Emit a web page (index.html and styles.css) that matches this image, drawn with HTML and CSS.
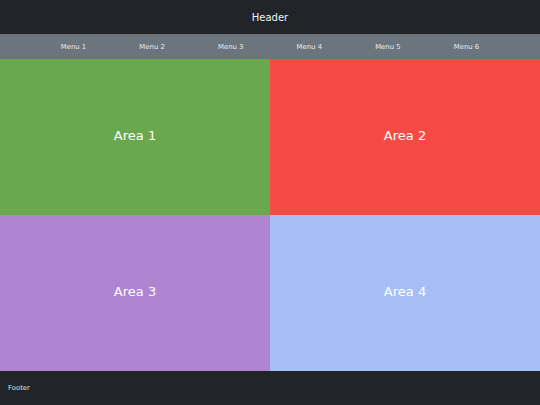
FILE: index.html
```html
<!DOCTYPE html>
<html>
<head>
<meta charset="utf-8">
<link rel="stylesheet" href="styles.css">
</head>
<body>
<div class="page">
  <header class="header">Header</header>
  <nav class="nav">
    <span class="nav-item">Menu 1</span>
    <span class="nav-item">Menu 2</span>
    <span class="nav-item">Menu 3</span>
    <span class="nav-item">Menu 4</span>
    <span class="nav-item">Menu 5</span>
    <span class="nav-item">Menu 6</span>
  </nav>
  <main class="grid">
    <div class="area area-1">Area 1</div>
    <div class="area area-2">Area 2</div>
    <div class="area area-3">Area 3</div>
    <div class="area area-4">Area 4</div>
  </main>
  <footer class="footer">Footer</footer>
</div>
</body>
</html>
```
FILE: styles.css
```css
html, body {
  margin: 0;
  padding: 0;
}
body {
  font-family: "DejaVu Sans", Verdana, sans-serif;
  width: 540px;
  height: 405px;
  overflow: hidden;
}
.page {
  display: flex;
  flex-direction: column;
  height: 405px;
}
.header {
  height: 34px;
  background: #212529;
  color: #f1f3f5;
  font-size: 10px;
  display: flex;
  align-items: center;
  justify-content: center;
}
.nav {
  height: 25px;
  background: #6c757d;
  display: grid;
  grid-template-columns: repeat(6, 78.6px);
  justify-content: center;
  align-items: center;
}
.nav-item {
  text-align: center;
  color: #e9ecef;
  font-size: 6.9px;
}
.grid {
  flex: 1;
  display: grid;
  grid-template-columns: 1fr 1fr;
  grid-template-rows: 1fr 1fr;
}
.area {
  display: flex;
  align-items: center;
  justify-content: center;
  color: #ffffff;
  font-size: 13px;
  padding-bottom: 3px;
}
.area-1 { background: #6aa84f; }
.area-2 { background: #f64a45; }
.area-3 { background: #af84d1; }
.area-4 { background: #a5bff5; }
.footer {
  height: 34px;
  background: #212529;
  color: #dee2e6;
  font-size: 6.9px;
  display: flex;
  align-items: center;
  padding-left: 8px;
}
```
